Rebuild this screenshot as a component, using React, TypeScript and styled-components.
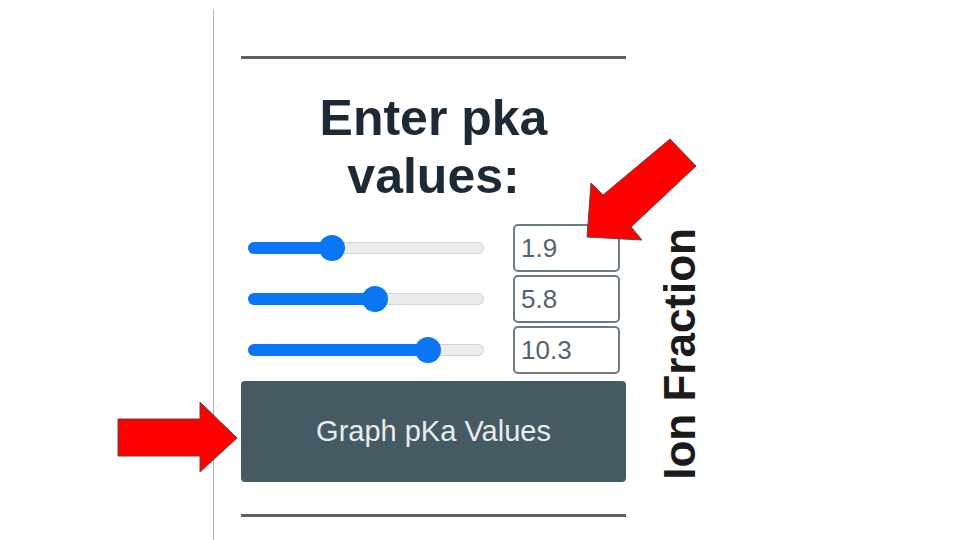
import React from 'react'
import styled, { createGlobalStyle } from 'styled-components'

const GlobalStyle = createGlobalStyle`
  html, body {
    margin: 0;
    padding: 0;
    background: #ffffff;
  }
  body {
    font-family: "Liberation Sans", Arial, sans-serif;
  }
`

export const Page = styled.div`
width: 960px;
height: 540px;
position: relative;
overflow: hidden;
display: flex;
padding-left: 213px;
box-sizing: border-box;
background: #fff;
`

export const Content = styled.div`
margin-top: 9px;
border-left: 1px solid #b4b4b4;
padding-left: 27px;
display: flex;
align-items: flex-start;
`

export const Panel = styled.div`
width: 385px;
padding-top: 47px;
display: flex;
flex-direction: column;
`

export const Rule = styled.div<{ $gap?: number }>`
height: 3px;
background: #59626a;
margin-top: ${p => p.$gap ?? 0}px;
`

export const Heading = styled.h2`
margin: 30px 0 0;
font-family: "Liberation Sans", Arial, sans-serif;
font-weight: 700;
font-size: 50px;
line-height: 58px;
text-align: center;
color: #1d2a35;
`

export const Rows = styled.div`
margin-top: 19px;
display: flex;
flex-direction: column;
gap: 3px;
`

export const Row = styled.div`
display: grid;
grid-template-columns: 236px 107px;
column-gap: 29px;
align-items: center;
padding-left: 7px;
height: 48px;
`

export const Track = styled.div`
position: relative;
height: 12px;
border-radius: 6px;
background: #ececec;
box-shadow: inset 0 0 0 1px #d6d6d6;
`

export const Fill = styled.div`
height: 12px;
border-radius: 6px;
background: #0b76f4;
`

export const Thumb = styled.div`
position: absolute;
top: 50%;
width: 26px;
height: 26px;
margin: -13px 0 0 -13px;
border-radius: 50%;
background: #0b76f4;
`

export const ValueBox = styled.div`
height: 48px;
box-sizing: border-box;
border: 2px solid #6b7c84;
border-radius: 5px;
padding-left: 6px;
display: flex;
align-items: center;
font-size: 26px;
color: #556270;
background: #fff;
`

export const GraphButton = styled.button`
margin-top: 7px;
height: 101px;
border: none;
border-radius: 4px;
background: #455a63;
color: #e8ecee;
font-family: "Liberation Sans", Arial, sans-serif;
font-size: 29px;
cursor: pointer;
`

export const AxisLabel = styled.div`
margin: 219px 0 0 30px;
writing-mode: vertical-rl;
transform: rotate(180deg);
font-family: "Liberation Sans", Arial, sans-serif;
font-weight: 700;
font-size: 44px;
line-height: 48px;
color: #1b1b1b;
white-space: nowrap;
`

export const Callout = styled.svg`
position: absolute;
left: 0;
top: 0;
pointer-events: none;
`

const sliders = [
  { value: '1.9', pos: 84 },
  { value: '5.8', pos: 127 },
  { value: '10.3', pos: 180 },
]

export default function App() {
  return (
    <>
      <GlobalStyle />
      <Page>
        <Content>
          <Panel>
            <Rule />
            <Heading>Enter pka<br />values:</Heading>
            <Rows>
              {sliders.map(s => (
                <Row key={s.value}>
                  <Track>
                    <Fill style={{ width: s.pos }} />
                    <Thumb style={{ left: s.pos }} />
                  </Track>
                  <ValueBox>{s.value}</ValueBox>
                </Row>
              ))}
            </Rows>
            <GraphButton>Graph pKa Values</GraphButton>
            <Rule $gap={32} />
          </Panel>
          <AxisLabel>Ion Fraction</AxisLabel>
        </Content>

        {/* red annotation arrows over the screenshot */}
        <Callout width="960" height="540" viewBox="0 0 960 540">
          <polygon
            points="118,419 200,419 200,402 237,438 200,472 200,456 118,456"
            fill="#ff0000"
            stroke="#5b4646"
            strokeWidth="1"
          />
          <polygon
            points="587,237 591,183 603,195 670,139 696,166 631,227 642,240"
            fill="#ff0000"
            stroke="#5b4646"
            strokeWidth="1"
          />
        </Callout>
      </Page>
    </>
  )
}
